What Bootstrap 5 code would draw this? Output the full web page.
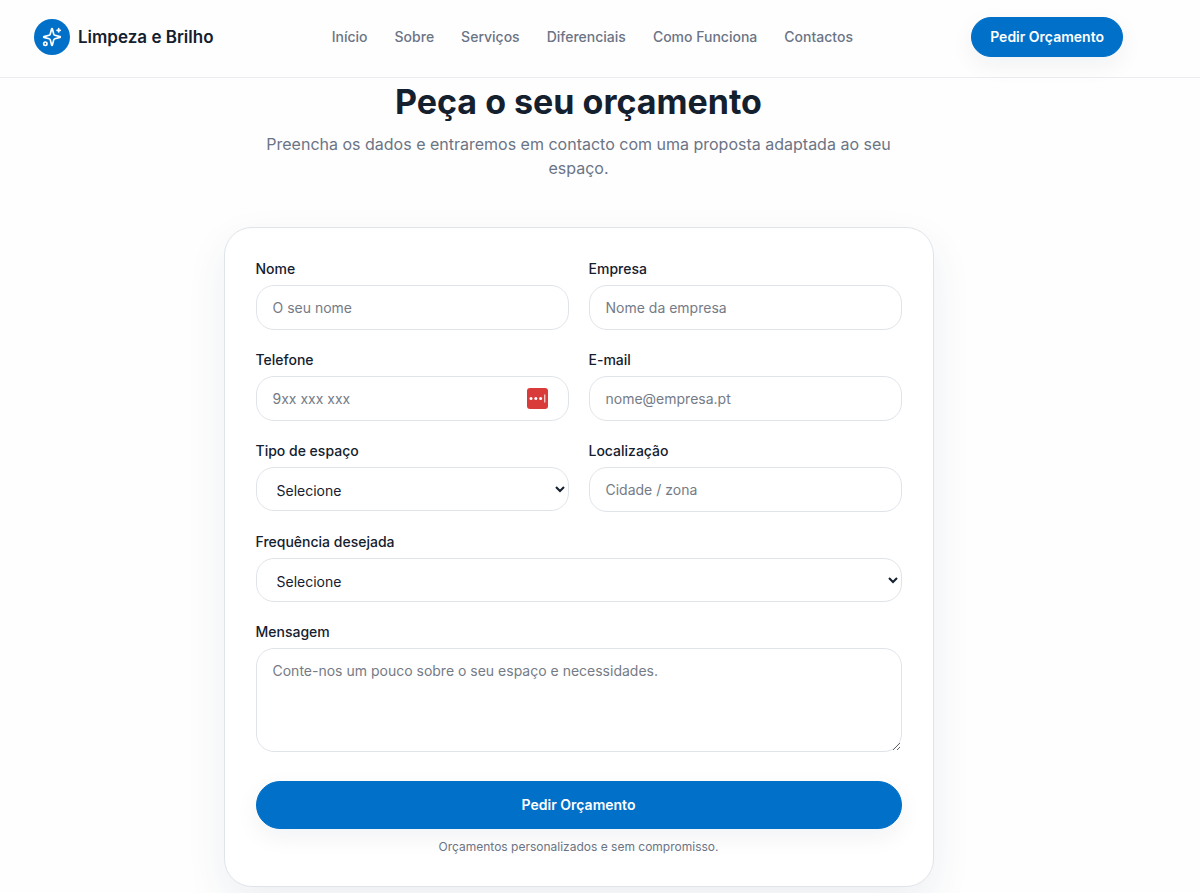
<!DOCTYPE html>
<html lang="pt">
<head>
<meta charset="utf-8">
<meta name="viewport" content="width=device-width, initial-scale=1">
<title>Limpeza e Brilho</title>
<link href="https://cdn.jsdelivr.net/npm/bootstrap@5.3.0/dist/css/bootstrap.min.css" rel="stylesheet">
<style>
  :root { --brand: #0070c9; --ink: #14202e; --soft: #6b7485; --line: #e0e4e9; --gutter-end: 43px; }
  body { font-family: Inter, "Liberation Sans", sans-serif; font-size: 14px; line-height: 20px; color: var(--ink); background: #fefefe; }
  .site-header { border-bottom: 1px solid #eaecef; padding: 17px calc(34px + var(--gutter-end)) 20px 34px; }
  .brand-name { font-size: 17px; font-weight: 600; color: var(--ink); }
  .brand-mark { width: 36px; height: 36px; background: var(--brand); }
  .site-nav { gap: 27px; }
  .site-nav .nav-link { padding: 0; font-weight: 500; color: var(--soft); }
  .btn-brand { --bs-btn-color: #fff; --bs-btn-bg: var(--brand); --bs-btn-border-color: var(--brand); --bs-btn-hover-color: #fff; --bs-btn-hover-bg: #0062b1; --bs-btn-hover-border-color: #0062b1; --bs-btn-font-size: 14px; --bs-btn-font-weight: 600; --bs-btn-line-height: 20px; --bs-btn-padding-x: 18px; --bs-btn-padding-y: 9px; box-shadow: 0 8px 24px rgba(20, 40, 70, .06); }
  .btn-tall { --bs-btn-padding-y: 13px; margin-top: 29px; }
  .page-main { padding: 0 var(--gutter-end) 24px 0; }
  .page-title { font-size: 34px; line-height: 44px; font-weight: 700; margin: 2px 0 8px; }
  .intro { max-width: 660px; font-size: 16px; line-height: 24px; color: var(--soft); margin-bottom: 47px; }
  .quote-card { max-width: 710px; padding: 31px; border: 1px solid var(--line); border-radius: 28px; background: #fff; box-shadow: 0 16px 40px rgba(20, 60, 100, .08); }
  .quote-card .row { --bs-gutter-x: 20px; --bs-gutter-y: 20px; }
  .field-label { display: block; font-weight: 500; margin-bottom: 6px; }
  .field { border: 1px solid var(--line); border-radius: 18px; padding: 11px 16px; font-size: 14px; line-height: 21px; color: var(--ink); background-color: #fff; }
  .field::placeholder { color: #757b86; }
  select.field { display: block; width: 100%; height: 44px; appearance: auto; padding: 12px 0 10px 16px; }
  textarea.field { height: 104px; resize: vertical; }
  .vault-icon { position: absolute; right: 21px; top: 12px; padding: 0; border: 0; background: none; line-height: 0; }
  .fine-print { font-size: 12px; line-height: 16px; color: var(--soft); margin: 10px 0 0; }
</style>
</head>
<body>
<header class="site-header d-flex flex-wrap align-items-center justify-content-between">
  <a href="#" class="d-flex align-items-center gap-2 text-decoration-none">
    <span class="brand-mark rounded-circle d-flex align-items-center justify-content-center">
      <svg width="20" height="20" viewBox="0 0 24 24" fill="none" stroke="#fff" stroke-width="2" stroke-linecap="round" stroke-linejoin="round" aria-hidden="true">
        <path d="M9.937 15.5A2 2 0 0 0 8.5 14.063l-6.135-1.582a.5.5 0 0 1 0-.962L8.5 9.936A2 2 0 0 0 9.937 8.5l1.582-6.135a.5.5 0 0 1 .963 0L14.063 8.5A2 2 0 0 0 15.5 9.937l6.135 1.581a.5.5 0 0 1 0 .964L15.5 14.063a2 2 0 0 0-1.437 1.437l-1.582 6.135a.5.5 0 0 1-.963 0z"/>
        <path d="M20 2v4M22 4h-4"/><circle cx="4" cy="20" r="2"/>
      </svg>
    </span>
    <span class="brand-name">Limpeza e Brilho</span>
  </a>
  <nav class="nav site-nav" aria-label="Principal">
    <a class="nav-link" href="#">Início</a>
    <a class="nav-link" href="#">Sobre</a>
    <a class="nav-link" href="#">Serviços</a>
    <a class="nav-link" href="#">Diferenciais</a>
    <a class="nav-link" href="#">Como Funciona</a>
    <a class="nav-link" href="#">Contactos</a>
  </nav>
  <button type="button" class="btn btn-brand rounded-pill">Pedir Orçamento</button>
</header>
<main class="page-main">
  <h1 class="page-title text-center">Peça o seu orçamento</h1>
  <p class="intro text-center mx-auto">Preencha os dados e entraremos em contacto com uma proposta adaptada ao seu espaço.</p>
  <form class="quote-card mx-auto">
    <div class="row">
      <div class="col-sm-6">
        <label class="field-label" for="nome">Nome</label>
        <input class="form-control field" id="nome" type="text" placeholder="O seu nome">
      </div>
      <div class="col-sm-6">
        <label class="field-label" for="empresa">Empresa</label>
        <input class="form-control field" id="empresa" type="text" placeholder="Nome da empresa">
      </div>
      <div class="col-sm-6">
        <label class="field-label" for="telefone">Telefone</label>
        <div class="position-relative">
          <input class="form-control field" id="telefone" type="tel" placeholder="9xx xxx xxx">
          <button type="button" class="vault-icon" aria-label="Preencher">
            <svg width="21" height="21" viewBox="0 0 21 21" aria-hidden="true">
              <rect width="21" height="21" rx="3" fill="#d93a3a"/>
              <g fill="#fff"><circle cx="4" cy="10.500" r="1.500"/><circle cx="8.800" cy="10.500" r="1.500"/><circle cx="13.600" cy="10.500" r="1.500"/><rect x="17.300" y="6.500" width="1" height="8"/></g>
            </svg>
          </button>
        </div>
      </div>
      <div class="col-sm-6">
        <label class="field-label" for="email">E-mail</label>
        <input class="form-control field" id="email" type="email" placeholder="nome@empresa.pt">
      </div>
      <div class="col-sm-6">
        <label class="field-label" for="tipo">Tipo de espaço</label>
        <select class="field" id="tipo"><option>Selecione</option></select>
      </div>
      <div class="col-sm-6">
        <label class="field-label" for="local">Localização</label>
        <input class="form-control field" id="local" type="text" placeholder="Cidade / zona">
      </div>
      <div class="col-12">
        <label class="field-label" for="frequencia">Frequência desejada</label>
        <select class="field" id="frequencia"><option>Selecione</option></select>
      </div>
      <div class="col-12">
        <label class="field-label" for="mensagem">Mensagem</label>
        <textarea class="form-control field" id="mensagem" placeholder="Conte-nos um pouco sobre o seu espaço e necessidades."></textarea>
      </div>
    </div>
    <button type="submit" class="btn btn-brand btn-tall rounded-pill w-100">Pedir Orçamento</button>
    <p class="fine-print text-center">Orçamentos personalizados e sem compromisso.</p>
  </form>
</main>
<script src="https://cdn.jsdelivr.net/npm/bootstrap@5.3.0/dist/js/bootstrap.bundle.min.js"></script>
</body>
</html>
